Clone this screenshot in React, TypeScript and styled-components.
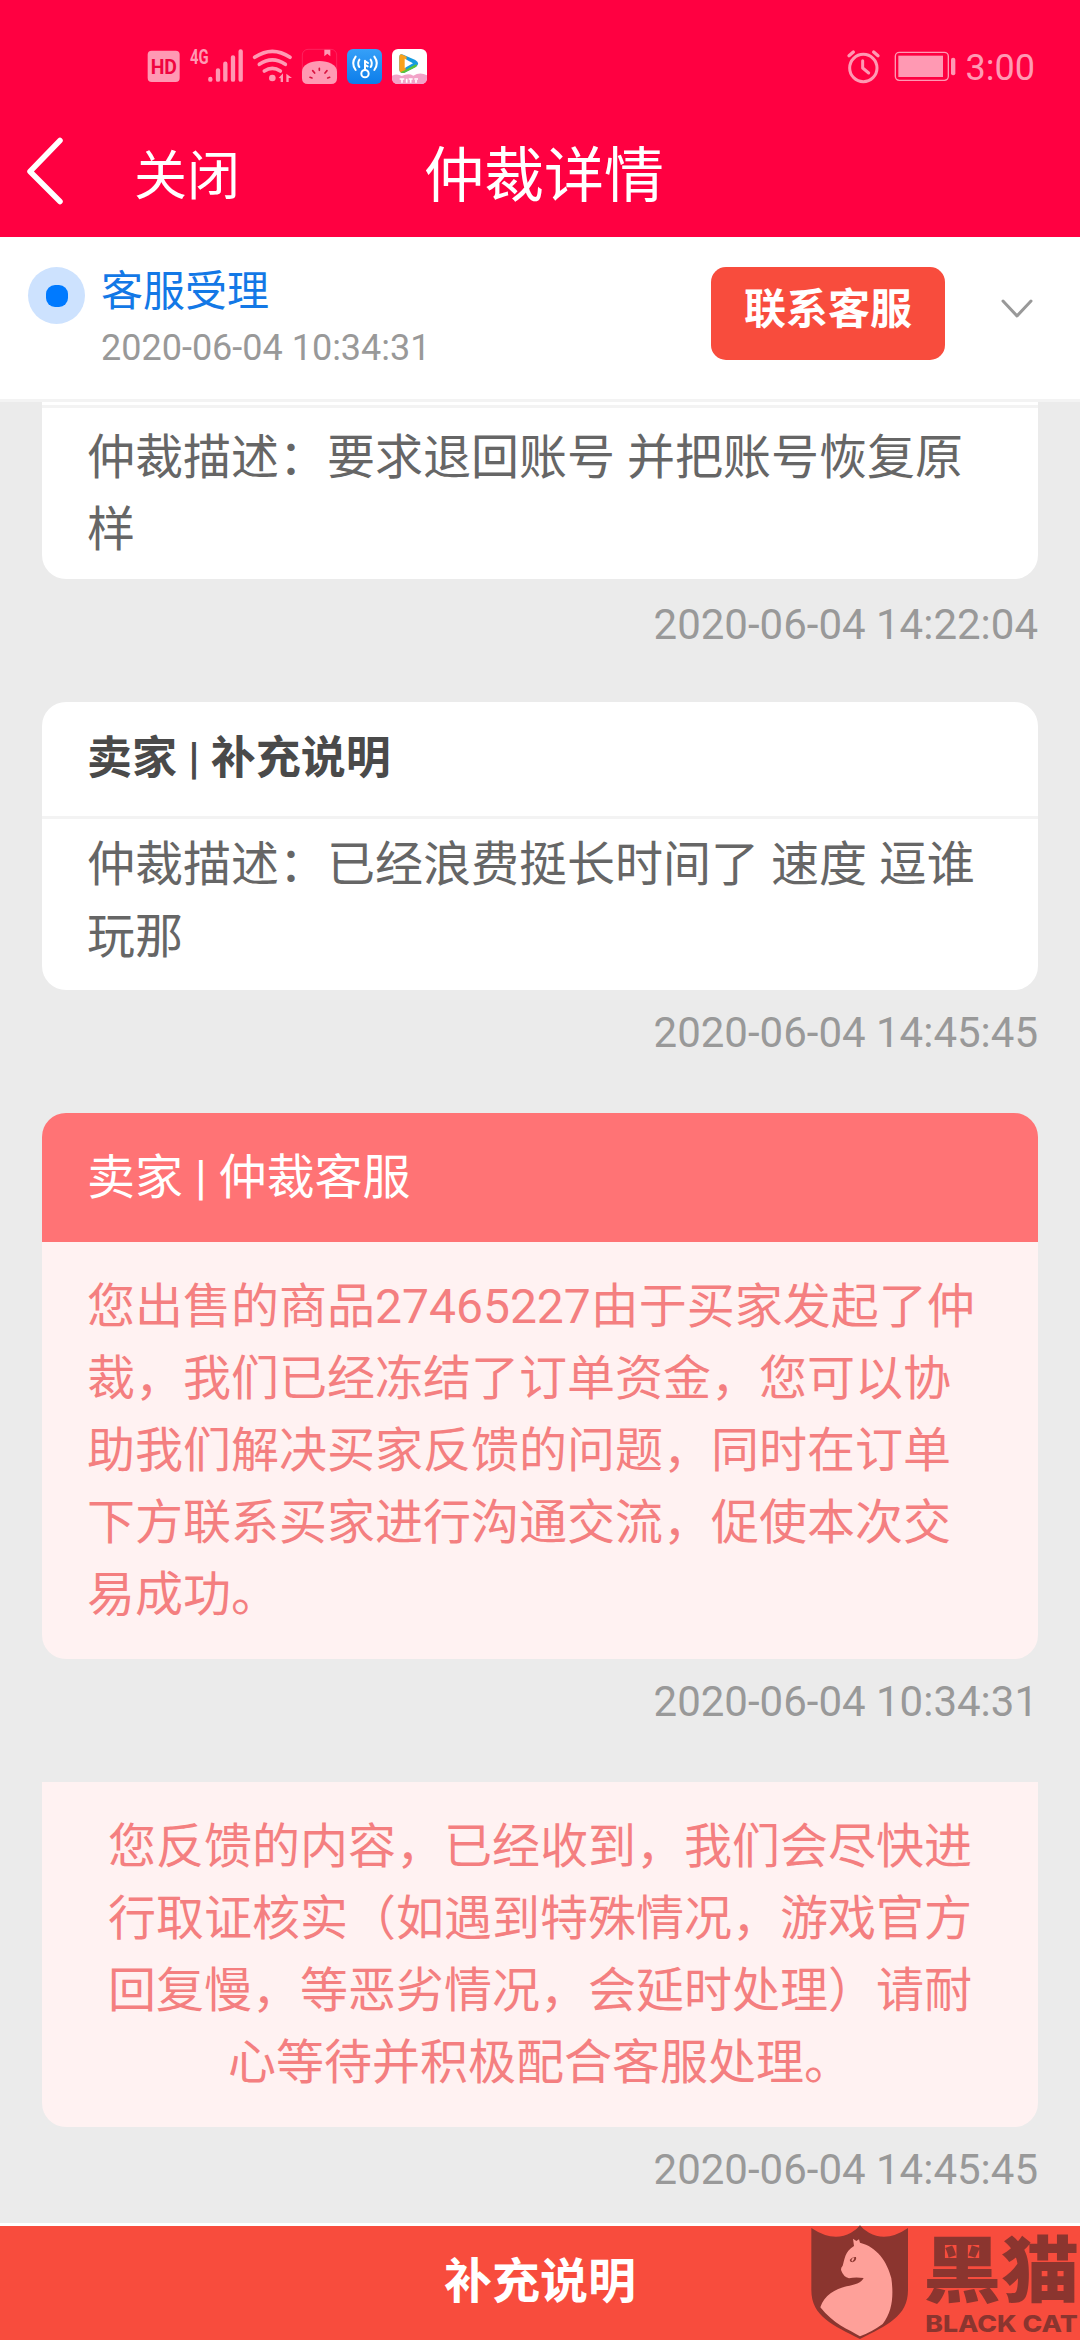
import React from "react";
import styled, { createGlobalStyle } from "styled-components";

const GlobalStyle = createGlobalStyle`
  *, *::before, *::after { box-sizing: border-box; }
  body {
    margin: 0;
    background: #ebebeb;
    font-family: Roboto, "Noto Sans CJK SC", sans-serif;
  }
  button { font-family: inherit; border: 0; padding: 0; cursor: pointer; }
`;

const Screen = styled.div`
  position: relative;
  display: flex;
  flex-direction: column;
  width: 1080px;
  height: 2340px;
  overflow: hidden;
  background: #ebebeb;
`;

const TopArea = styled.header`
  flex: none;
  height: 237px;
  background: #ff0041;
  color: #fff;
`;

const StatusBar = styled.div`
  display: flex;
  align-items: center;
  justify-content: space-between;
  height: 132px;
  padding: 0 45px 0 147px;
`;

const IconGroup = styled.div<{ $gap: number }>`
  display: flex;
  align-items: center;
  gap: ${(p) => p.$gap}px;
  svg { display: block; }
`;

const Clock = styled.span`
  margin-left: -4px;
  font-size: 36px;
  line-height: 42px;
  color: #ff99b3;
  padding-top: 3px;
`;

const NavBar = styled.nav`
  display: grid;
  grid-template-columns: 424px 240px 1fr;
  align-items: center;
  height: 84px;
`;

const NavLeft = styled.div`
  display: flex;
  align-items: center;
  padding-left: 24px;
`;

const BackIcon = styled.svg`
  display: block;
  margin-bottom: 6px;
`;

const CloseButton = styled.button`
  margin-left: 68px;
  background: none;
  color: #fff;
  font-size: 53px;
  line-height: 60px;
  padding-top: 6px;
`;

const PageTitle = styled.h1`
  margin: 0;
  padding-top: 6px;
  font-size: 60px;
  font-weight: 400;
  line-height: 72px;
  white-space: nowrap;
`;

const ProgressPanel = styled.section`
  flex: none;
  display: flex;
  align-items: flex-start;
  height: 165px;
  padding: 30px 45px 0 28px;
  background: #fff;
  border-bottom: 3px solid #f3f3f3;
`;

const StepDot = styled.span`
  flex: none;
  display: flex;
  align-items: center;
  justify-content: center;
  width: 57px;
  height: 57px;
  border-radius: 50%;
  background: #cde2fe;
  &::before {
    content: "";
    width: 22px;
    height: 22px;
    border-radius: 9px;
    background: #007aff;
  }
`;

const StepInfo = styled.div`
  flex: 1;
  margin-left: 16px;
`;

const StepName = styled.div`
  font-size: 42px;
  line-height: 50px;
  color: #1378e6;
`;

const StepTime = styled.div`
  margin-top: 10px;
  font-size: 36px;
  line-height: 42px;
  color: #999;
`;

const ContactButton = styled.button`
  width: 234px;
  height: 93px;
  padding-bottom: 16px;
  border-radius: 15px;
  background: #f84c3d;
  color: #fff;
  font-size: 42px;
  font-weight: 700;
`;

const ExpandIcon = styled.svg`
  display: block;
  margin: 31px 0 0 54px;
`;

const MessageList = styled.main`
  flex: 1;
  min-height: 0;
  overflow: hidden;
  padding: 0 42px;
`;

const Card = styled.article<{ $clipped?: boolean }>`
  overflow: hidden;
  border-radius: ${(p) => (p.$clipped ? "0 0 24px 24px" : "24px")};
`;

const CardHeader = styled.h2<{ $notice?: boolean }>`
  margin: 0;
  height: ${(p) => (p.$notice ? 129 : 117)}px;
  padding: 0 45px;
  font-size: ${(p) => (p.$notice ? 48 : 45)}px;
  font-weight: ${(p) => (p.$notice ? 400 : 700)};
  line-height: ${(p) => (p.$notice ? 129 : 113)}px;
  color: ${(p) => (p.$notice ? "#fff" : "#4a4a4a")};
  background: ${(p) => (p.$notice ? "#ff7375" : "#fff")};
  border-bottom: ${(p) => (p.$notice ? "0" : "3px solid #f3f3f3")};
`;

const HeaderRemainder = styled.div`
  height: 6px;
  background: #fff;
  border-bottom: 3px solid #f3f3f3;
`;

const CardBody = styled.p<{ $notice?: boolean; $center?: boolean; $top: number; $bottom: number }>`
  margin: 0;
  padding: ${(p) => p.$top}px 45px ${(p) => p.$bottom}px;
  font-size: 48px;
  line-height: 72px;
  text-align: ${(p) => (p.$center ? "center" : "left")};
  color: ${(p) => (p.$notice ? "#f47f80" : "#666")};
  background: ${(p) => (p.$notice ? "#fff2f2" : "#fff")};
`;

const MessageTime = styled.time<{ $line: number }>`
  display: block;
  height: 123px;
  font-size: 42px;
  line-height: ${(p) => p.$line}px;
  text-align: right;
  color: #999;
`;

const FooterButton = styled.button`
  flex: none;
  height: 117px;
  border-top: 3px solid #fff;
  padding-bottom: 12px;
  background: #f84c3d;
  color: #fff;
  font-size: 48px;
  font-weight: 700;
`;

const Watermark = styled.svg`
  position: absolute;
  right: 0;
  bottom: 0;
`;

const pink = "#ff99b3";

const HdIcon = () => (
  <svg width="34" height="40" viewBox="51 48 102 120">
    <rect x="53" y="62" width="96" height="94" rx="12" fill={pink} />
    <text x="62" y="131" fontSize="61" fontWeight="700" fill="#f0043f" textLength="79" lengthAdjust="spacingAndGlyphs">HD</text>
  </svg>
);

const SignalIcon = () => (
  <svg width="55" height="40" viewBox="180 48 165 120">
    <text x="183" y="101" fontSize="59" fontWeight="700" fill={pink} textLength="56" lengthAdjust="spacingAndGlyphs">4G</text>
    <g stroke={pink} strokeWidth="13" strokeLinecap="round">
      <path d="M244 147V149M267 121V149M289 101V149M312 82V149M335 64V149" />
    </g>
  </svg>
);

const WifiIcon = () => (
  <svg width="41" height="40" viewBox="369 48 123 120">
    <g fill="none" stroke={pink} strokeWidth="11" strokeLinecap="round">
      <path d="M377 82Q430 46 483 82" />
      <path d="M391 103Q430 76 469 103" />
      <path d="M406 123Q430 107 454 123" />
    </g>
    <circle cx="430" cy="144" r="10" fill={pink} />
    <path d="M449 144L462 130V156H455V145ZM472 131L489 144H479V156H472Z" fill={pink} />
  </svg>
);

const MelonIcon = () => (
  <svg width="37" height="40" viewBox="513 48 111 120">
    <rect x="517" y="58" width="103" height="102" rx="17" fill="none" stroke="#f9568a" strokeWidth="2" opacity=".6" />
    <path d="M583 59H601V79L592 71L583 79Z" fill={pink} />
    <path d="M516 125C516 82 621 82 621 125V144Q621 162 603 162H534Q516 162 516 144Z" fill={pink} />
    <path d="M568 115V121M548 122L554 129M591 122L585 129M540 142L546 144M599 142L593 144" stroke="#d9143f" strokeWidth="5" strokeLinecap="round" />
  </svg>
);

const KeyIcon = () => (
  <svg width="37" height="40" viewBox="648 48 111 120">
    <defs>
      <linearGradient id="keyBg" x1="0" y1="0" x2="0" y2="1">
        <stop offset="0" stopColor="#36a0f8" />
        <stop offset="1" stopColor="#0c7dea" />
      </linearGradient>
    </defs>
    <rect x="651" y="57" width="105" height="105" rx="18" fill="url(#keyBg)" />
    <g fill="none" stroke="#fff" strokeWidth="6" strokeLinecap="round">
      <circle cx="705" cy="131" r="11" />
      <path d="M705 119V92M706 94L714 99M706 105L713 109" />
      <path d="M688 89Q681 100 688 111M677 80Q662 100 677 120" />
      <path d="M722 89Q729 100 722 111M733 80Q748 100 733 120" />
    </g>
  </svg>
);

const VideoIcon = () => (
  <svg width="37" height="40" viewBox="783 48 111 120">
    <rect x="786" y="57" width="105" height="105" rx="18" fill="#fff" />
    <path d="M786 137Q802 129 815 138Q835 128 850 137Q870 124 891 136V144Q891 162 873 162H804Q786 162 786 144Z" fill="#f2a3c8" />
    <path d="M808 82Q808 70 820 74L856 90Q872 100 858 110L822 129Q808 131 808 118Z" fill="#179be0" />
    <path d="M808 82Q808 70 818 74L830 80L826 126Q808 133 808 118Z" fill="#f9a11b" />
    <path d="M826 120L858 103Q866 108 852 114L822 129Q814 130 812 126Z" fill="#59c63a" />
    <path d="M824 86L849 100L824 114Z" fill="#fff" />
    <path d="M809 147H823M816 147V158M830 146V158M836 147H848M842 147V158M853 147H864M858 150V158" stroke="#fff" strokeWidth="5" />
  </svg>
);

const AlarmIcon = () => (
  <svg width="35" height="40" viewBox="75 48 105 120">
    <g fill="none" stroke={pink} strokeLinecap="round">
      <circle cx="127" cy="114" r="41" strokeWidth="9" />
      <path d="M125 92V114L143 129" strokeWidth="9" strokeLinejoin="round" />
      <path d="M84 77L97 66M171 77L158 66" strokeWidth="10" />
    </g>
  </svg>
);

const BatteryIcon = () => (
  <svg width="63" height="40" viewBox="222 48 189 120">
    <rect x="226" y="67" width="159" height="84" rx="12" fill="none" stroke={pink} strokeWidth="4" />
    <rect x="235" y="77" width="134" height="64" fill={pink} />
    <rect x="393" y="83" width="13" height="53" rx="6" fill={pink} />
  </svg>
);

const BlackCatMark = () => (
  <Watermark width="270" height="117" viewBox="90 69 810 351">
    <path d="M94 84Q160 128 213 98Q230 90 240 76Q250 90 267 98Q320 128 384 84V270C384 350 320 376 240 417C160 376 94 350 94 270Z" fill="#8b352f" />
    <path d="M219 116L229 123L237 118L240 128C290 140 322 185 334 235C341 285 338 335 308 372Q275 396 240 409C205 388 160 372 121 322C133 285 165 268 200 259C225 254 243 249 251 234Q225 230 207 235Q190 230 184 212Q181 205 188 197C194 178 194 155 222 138Z" fill="#fea099" />
    <path d="M209 180Q216 170 228 171Q231 181 218 187Q210 187 209 180Z" fill="#8b352f" />
    <path d="M219 172L223 176L217 185L214 181Z" fill="#fea099" />
    <text x="430" y="287" fontFamily="'Noto Sans CJK SC', sans-serif" fontSize="214" fontWeight="900" fill="#8b352f" textLength="468" lengthAdjust="spacingAndGlyphs">黑猫</text>
    <text x="436" y="397" fontFamily="Inter, sans-serif" fontSize="67" fontWeight="800" fill="#8b352f" textLength="457" lengthAdjust="spacingAndGlyphs">BLACK CAT</text>
  </Watermark>
);

export default function App() {
  return (
    <Screen>
      <GlobalStyle />
      <TopArea>
        <StatusBar>
          <IconGroup $gap={8}>
            <HdIcon />
            <SignalIcon />
            <WifiIcon />
            <MelonIcon />
            <KeyIcon />
            <VideoIcon />
          </IconGroup>
          <IconGroup $gap={13}>
            <AlarmIcon />
            <BatteryIcon />
            <Clock>3:00</Clock>
          </IconGroup>
        </StatusBar>
        <NavBar>
          <NavLeft>
            <BackIcon width="42" height="72" viewBox="0 0 42 72">
              <path d="M36 5.5L6 36.500L36 66.500" fill="none" stroke="#fff" strokeWidth="5.500" strokeLinecap="round" strokeLinejoin="round" />
            </BackIcon>
            <CloseButton>关闭</CloseButton>
          </NavLeft>
          <PageTitle>仲裁详情</PageTitle>
        </NavBar>
      </TopArea>

      <ProgressPanel>
        <StepDot />
        <StepInfo>
          <StepName>客服受理</StepName>
          <StepTime>2020-06-04 10:34:31</StepTime>
        </StepInfo>
        <ContactButton>联系客服</ContactButton>
        <ExpandIcon width="36" height="24" viewBox="0 0 36 24">
          <path d="M4 3L18 18L32 3" fill="none" stroke="#999" strokeWidth="3" strokeLinecap="round" strokeLinejoin="round" />
        </ExpandIcon>
      </ProgressPanel>

      <MessageList>
        <Card $clipped>
          <HeaderRemainder />
          <CardBody $top={14} $bottom={13}>仲裁描述：要求退回账号 并把账号恢复原样</CardBody>
        </Card>
        <MessageTime $line={92}>2020-06-04 14:22:04</MessageTime>

        <Card>
          <CardHeader>卖家 | 补充说明</CardHeader>
          <CardBody $top={10} $bottom={17}>仲裁描述：已经浪费挺长时间了 速度 逗谁玩那</CardBody>
        </Card>
        <MessageTime $line={86}>2020-06-04 14:45:45</MessageTime>

        <Card>
          <CardHeader $notice>卖家 | 仲裁客服</CardHeader>
          <CardBody $notice $top={29} $bottom={28}>
            您出售的商品27465227由于买家发起了仲裁，我们已经冻结了订单资金，您可以协助我们解决买家反馈的问题，同时在订单下方联系买家进行沟通交流，促使本次交易成功。
          </CardBody>
        </Card>
        <MessageTime $line={86}>2020-06-04 10:34:31</MessageTime>

        <Card $clipped>
          <CardBody $notice $center $top={29} $bottom={28}>
            您反馈的内容，已经收到，我们会尽快进行取证核实（如遇到特殊情况，游戏官方回复慢，等恶劣情况，会延时处理）请耐心等待并积极配合客服处理。
          </CardBody>
        </Card>
        <MessageTime $line={86}>2020-06-04 14:45:45</MessageTime>
      </MessageList>

      <FooterButton>补充说明</FooterButton>
      <BlackCatMark />
    </Screen>
  );
}
